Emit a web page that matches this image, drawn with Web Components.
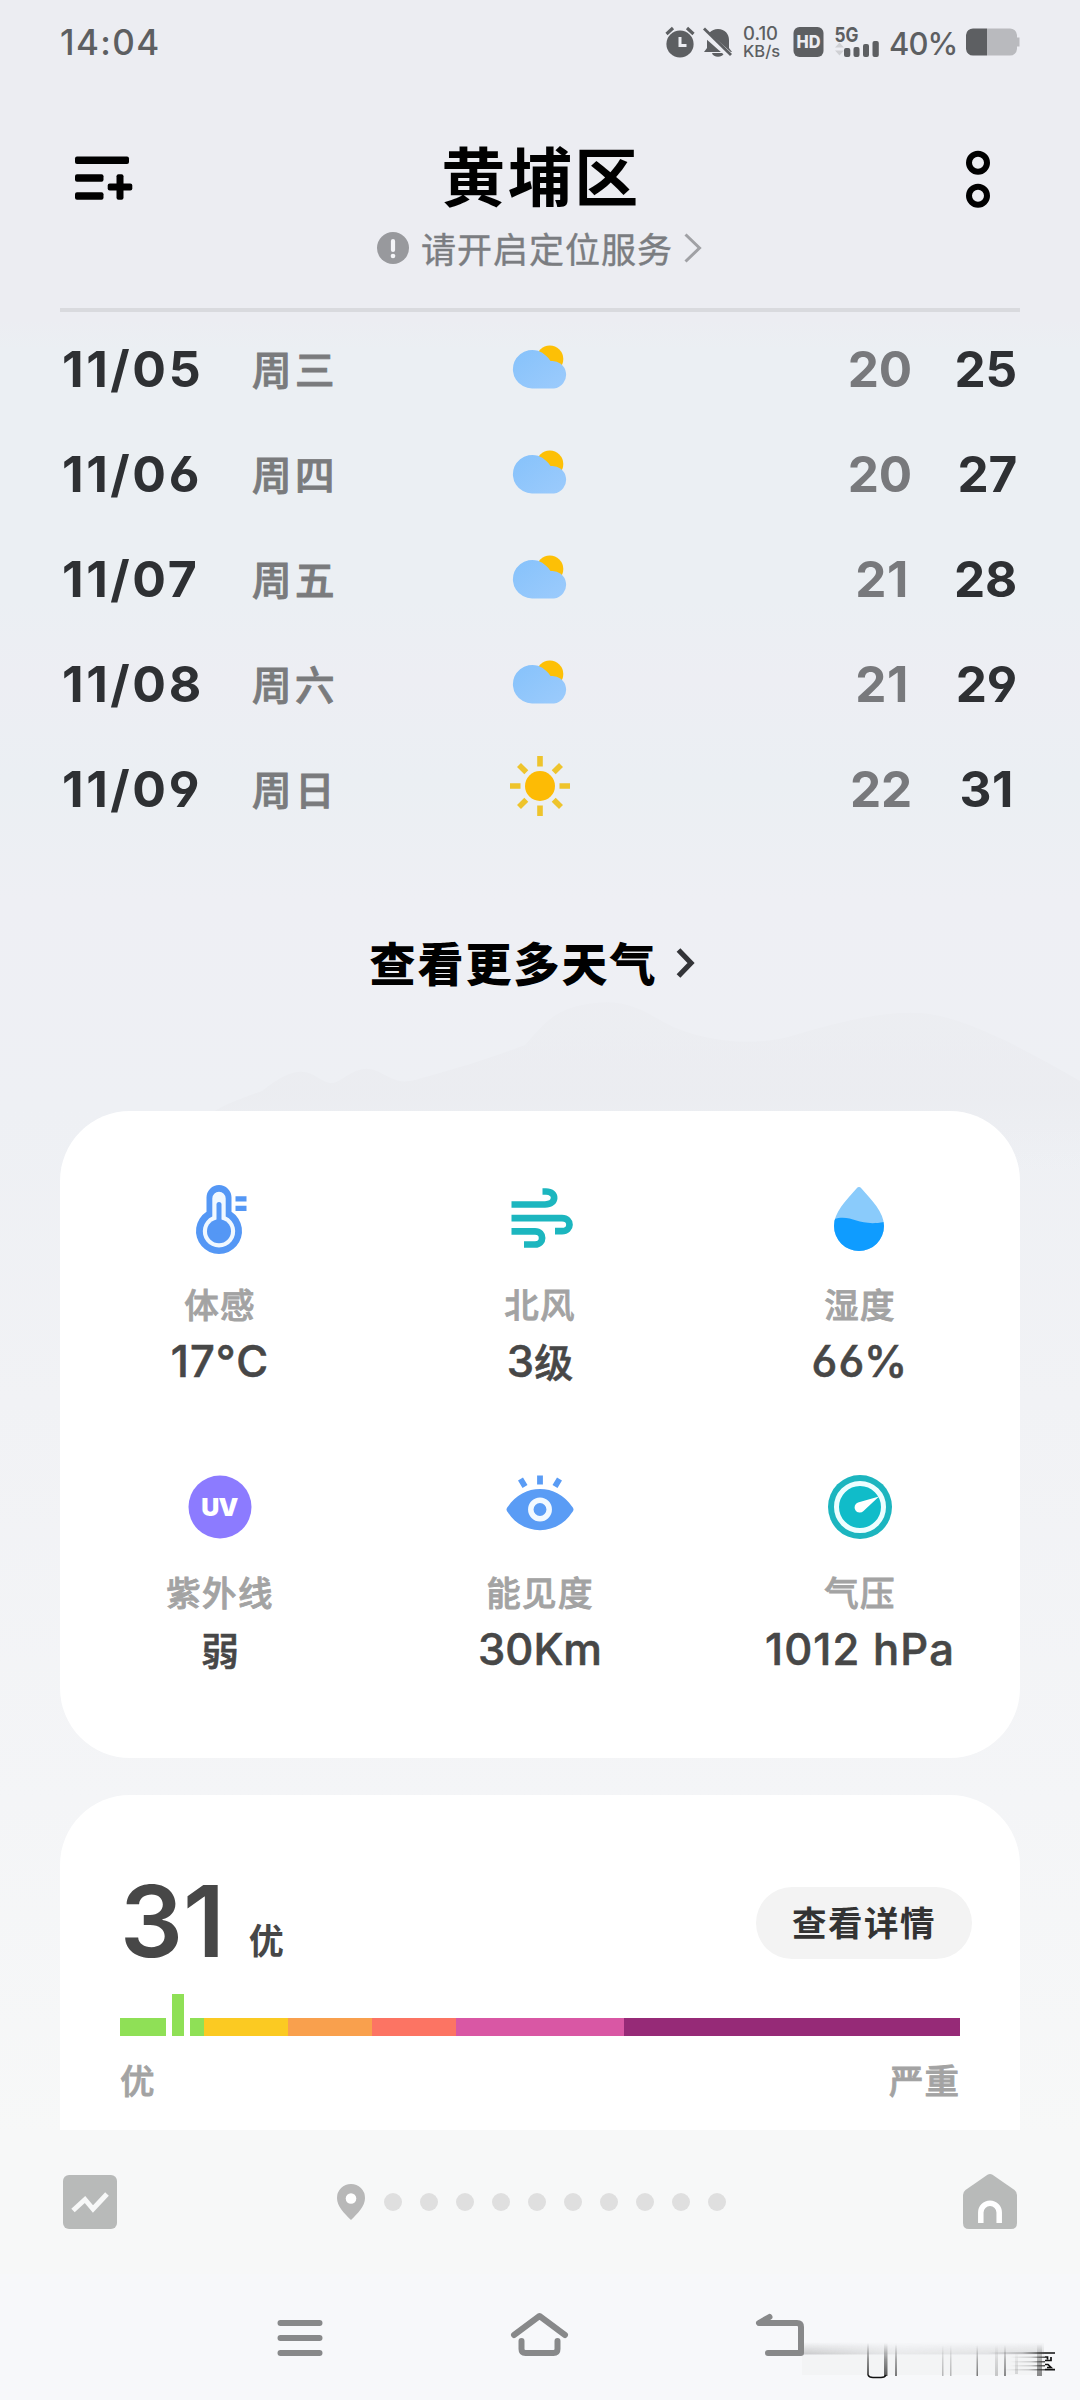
<!DOCTYPE html>
<html lang="zh-CN">
<head>
<meta charset="utf-8">
<title>天气</title>
<style>
html,body{margin:0;padding:0}
body{width:1080px;height:2400px;overflow:hidden;font-family:Inter,"Noto Sans CJK SC",sans-serif;font-feature-settings:"cv03","cv04"}
</style>
</head>
<body>
<weather-app></weather-app>
<script>
const define = (name, html, setup) => {
  const tpl = document.createElement('template');
  tpl.innerHTML = '<style>*{box-sizing:border-box}svg{display:block;flex:none;overflow:visible}</style>' + html;
  customElements.define(name, class extends HTMLElement {
    constructor() {
      super();
      this.attachShadow({mode: 'open'}).appendChild(tpl.content.cloneNode(true));
    }
    connectedCallback() { if (setup) setup(this, this.shadowRoot); }
  });
};

/* Status bar */
define('status-bar', `
<style>
:host{display:flex;height:84px;padding:0 60px 0 60px;align-items:center;justify-content:space-between;color:#5d5f62}
.time{font-size:35px;font-weight:500;letter-spacing:1.400px}
.right{display:flex;align-items:center}
.speed{display:flex;flex-direction:column;gap:3px;width:50px;margin-left:-1px;font-size:16.500px;line-height:15px;font-weight:500}
.speed span{height:15px}
.speed span:first-child{font-size:18.500px}
.pct{font-size:31px;font-weight:500;width:77px;padding-top:2px;letter-spacing:-.9px}
</style>
<span class="time">14:04</span>
<div class="right">
<svg width="79" height="32" viewBox="0 0 79 32" fill="#5d5f62"><circle cx="15" cy="18" r="13.6"/><path d="M1.5 8 8 2M22 2l6.500 6" stroke="#5d5f62" stroke-width="3.200"/><path d="M15 11v8.500h6.500" stroke="#ecedf2" stroke-width="3" fill="none"/><path d="M53 3c-7 0-11 5-11 11v8l-3 4h28l-3-4v-8c0-6-4-11-11-11zM47 27h12c-1 5-11 5-12 0z"/><path d="M36.500 4.500 66.500 31" stroke="#ecedf2" stroke-width="6.500"/><path d="M39 2.500 66 29" stroke="#5d5f62" stroke-width="2.800"/></svg>
<div class="speed"><span>0.10</span><span>KB/s</span></div>
<svg width="96" height="32" viewBox="0 0 96 32" fill="#5d5f62"><rect x=".5" y="1" width="30" height="30" rx="6"/><text x="15.500" y="22" font-size="17" font-weight="800" fill="#ecedf2" text-anchor="middle" textLength="24" lengthAdjust="spacingAndGlyphs">HD</text><text x="41.500" y="15.500" font-size="20" font-weight="700" textLength="24" lengthAdjust="spacingAndGlyphs">5G</text><path d="M42 21.500l4.500-5 4.500 5zM42 24.500l4.500 5 4.500-5z" fill="#cfd0d4"/><rect x="51" y="22" width="6.300" height="9" rx="2"/><rect x="60.500" y="21" width="6" height="10" rx="2"/><rect x="70" y="18" width="6" height="13" rx="2"/><rect x="79.500" y="15" width="6.300" height="16" rx="2"/></svg>
<span class="pct">40%</span>
<svg width="54" height="28" viewBox="0 0 54 28"><path d="M0 7a7 7 0 0 1 7-6.500h14v27H7A7 7 0 0 1 0 21z" fill="#5d5f62"/><path d="M21 .500h23a7 7 0 0 1 7 6.500v2.500h2.500v9H51V21a7 7 0 0 1-7 6.500H21z" fill="#b9babe"/></svg>
</div>`);

/* Page header */
define('page-header', `
<style>
:host{display:flex;flex-direction:column;height:228px;margin:0 60px;padding-top:53px;border-bottom:4px solid #d9dade}
.top{display:flex;height:81px;align-items:center;justify-content:space-between;padding:0 28px 0 15px}
h1{margin:0 11px 0 0;font-size:64px;line-height:81px;font-weight:700;letter-spacing:2.500px;color:#000}
.sub{display:flex;height:60px;align-items:center;justify-content:center;font-size:35px;letter-spacing:1px;color:#7b7d81;-webkit-text-stroke:.4px #7b7d81}
.sub span{margin:-2px 12px 0 12px}
</style>
<div class="top">
<svg width="58" height="46" viewBox="0 0 58 46"><rect y="1.500" width="54" height="7.500" rx="2"/><rect y="19.300" width="28.500" height="7.500" rx="2"/><rect y="37.200" width="28.500" height="7.500" rx="2"/><rect x="32.700" y="28.500" width="24.600" height="7" rx="2"/><rect x="41.500" y="19.300" width="7" height="25.400" rx="2"/></svg>
<h1><slot></slot></h1>
<svg width="32" height="60" viewBox="0 0 32 60" fill="none" stroke="#000" stroke-width="6"><circle cx="18" cy="14.800" r="9"/><circle cx="18" cy="47.800" r="9"/></svg>
</div>
<div class="sub">
<svg width="32" height="32" viewBox="0 0 32 32"><circle cx="16" cy="16" r="16" fill="#98999d"/><path d="M16 9v9" stroke="#f4f5f8" stroke-width="4.200" stroke-linecap="round"/><circle cx="16" cy="24" r="2.300" fill="#f4f5f8"/></svg>
<span><slot name="notice"></slot></span>
<svg width="18" height="30" viewBox="0 0 18 30" fill="none" stroke="#a0a1a5" stroke-width="3"><path d="M.500 1.500 14.500 15 .500 28.500"/></svg>
</div>`);

/* Weather glyphs */
define('weather-glyph', `
<style>:host{display:block}:host([kind=sunny]) .c,:host([kind=cloudy]) .s{display:none}</style>
<svg width="60" height="64" viewBox="0 0 60 64">
<g class="c"><defs><linearGradient id="g" x1="0" y1="0" x2="1" y2="1"><stop offset="0" stop-color="#86c2fb"/><stop offset="1" stop-color="#9ccbfc"/></linearGradient></defs>
<circle cx="39.800" cy="22" r="13.500" fill="#fdc006"/><path d="M22 51.500a19.300 19.300 0 1 1 14-32.800 18 18 0 0 1 4.500 5.300 13.800 13.800 0 1 1 3.500 27.500z" fill="url(#g)"/></g>
<g class="s"><circle cx="30" cy="29" r="15" fill="#fdbb05"/><path stroke="#eec42c" stroke-width="5.600" d="M30-1v10.500M30 48.500V59M0 29h10.500M49.500 29H60M9 8l7.300 7.300M43.700 42.700 51 50M51 8l-7.300 7.300M16.300 42.700 9 50"/></g>
</svg>`);

/* One forecast day */
define('forecast-day', `
<style>
:host{display:grid;grid-template-columns:192px 258px 60px 1fr 105px;height:105px;align-items:center;margin:0 60px;padding:0 3px 0 0;font-size:50px;font-weight:700;color:#2e3033}
.date{letter-spacing:2.600px;padding-left:2px}
.week{font-size:39.500px;font-weight:500;letter-spacing:3.500px;color:#7a7b7d;padding:0 0 2px 0;-webkit-text-stroke:.9px #7a7b7d}
.lo,.hi{text-align:right;font-size:49.500px;letter-spacing:-.2px}.lo{color:#78797c}
.one{padding-right:3px;letter-spacing:.6px}
</style>
<span class="date"></span><span class="week"></span><weather-glyph></weather-glyph><span class="lo"></span><span class="hi"></span>`,
(el, root) => {
  for (const k of ['date', 'week', 'lo', 'hi']) {
    const cell = root.querySelector('.' + k);
    cell.textContent = el.getAttribute(k);
    if (cell.textContent.endsWith('1')) cell.classList.add('one');
  }
  root.querySelector('weather-glyph').setAttribute('kind', el.getAttribute('kind'));
});

/* Link to the full forecast */
define('more-link', `
<style>
:host{display:flex;position:relative;height:270px;padding:0 15px 27px 0;align-items:center;justify-content:center;font-size:46px;font-weight:800;letter-spacing:2px;color:#000;gap:18px}
.hills{position:absolute;left:0;bottom:-60px;z-index:-1}
span{margin-top:-3px}
</style>
<svg class="hills" width="1080" height="170" viewBox="0 0 1080 170"><defs><linearGradient id="h" x1="0" y1="0" x2="0" y2="1"><stop offset="0" stop-color="#e9eaee" stop-opacity=".35"/><stop offset=".55" stop-color="#e9eaee" stop-opacity=".55"/><stop offset="1" stop-color="#e9eaee" stop-opacity="0"/></linearGradient></defs><path d="M200 120C220 104 240 98 262 90c25-20 40-24 55-14s18 6 28 0 20-12 34-5 20 12 36 8c50-14 70-20 110-35 20-22 30-38 70-42 30-4 50 8 70 20 40 20 90 24 130 12s100-28 140-20 90 34 145 66v90H200z" fill="url(#h)"/></svg>
<span><slot></slot></span>
<svg width="20" height="30" viewBox="0 0 20 30" fill="none" stroke="#333438" stroke-width="5.200"><path d="M2.500 2 15 15 2.500 28"/></svg>`);

/* White card */
define('soft-card', `
<style>:host{display:block;margin:0 60px;background:#fff;border-radius:70px}</style><slot></slot>`);

const icons = {
  temp: `<path d="M18.500 14.500a12.500 12.500 0 0 1 25 0v14.200a23 23 0 1 1-25 0z" fill="#5497f5"/><path d="M24.300 15.500a6.700 6.700 0 0 1 13.400 0v18a16.200 16.200 0 1 1-13.400 0z" fill="#f0f8ff"/><circle cx="31" cy="48.300" r="12" fill="#5497f5"/><path d="M31 21.500v27" stroke="#5497f5" stroke-width="5" stroke-linecap="round"/><path d="M47.500 15.800h11M47.500 25.300h11" stroke="#5497f5" stroke-width="5.300"/>`,
  wind: `<g fill="none" stroke="#1cb6bf" stroke-width="6.700" transform="translate(-1.500 -.500)"><path d="M5 22h33.500c12 0 12-13 1-13H36"/><path d="M5 35.700h50.500c10 0 10 13 0 13H48.500"/><path d="M5 48.800h23.500c9.500 0 9.500 13.200 0 13.200H17.500"/></g>`,
  drop: `<defs><clipPath id="d"><path d="M29.500 5.500q2.500-2.800 5 0c10.500 12 22.500 23.500 22.500 37.500a25 25 0 0 1-50 0C7 29 19 17.500 29.500 5.500z"/></clipPath></defs><g clip-path="url(#d)" transform="translate(-1 0)"><path d="M0 0h64v68H0z" fill="#8acbfb"/><path d="M7 36c19-5 24 8 50 3v30H7z" fill="#0f9cff"/></g>`,
  uv: `<circle cx="32" cy="36" r="31.500" fill="#8c7bff"/><text x="32.300" y="45" font-family="Inter" font-size="25" font-weight="900" fill="#fff" text-anchor="middle" textLength="38" letter-spacing="1">UV</text>`,
  eye: `<path d="M0 35.500C15 12 49 12 64 35.500c2 2.500 2 3.500 0 6C49 65 15 65 0 41.500c-2-2.500-2-3.500 0-6z" fill="#5a9cf5"/><circle cx="32" cy="38.500" r="9.200" fill="none" stroke="#f2f9ff" stroke-width="5.500"/><path d="M32 4.500v9M12.500 8l4.500 7.500M51.500 8 47 15.500" stroke="#5a9cf5" stroke-width="5.800"/>`,
  gauge: `<circle cx="32" cy="36" r="32" fill="#1cb5bf"/><circle cx="32" cy="36" r="23.500" fill="#10bcc9" stroke="#edfeff" stroke-width="5"/><path d="M51 25.500 35.500 40a5.200 5.200 0 1 1-5.500-8.500z" fill="#fff"/>`
};

/* One metric */
define('metric-cell', `
<style>
:host{display:flex;flex-direction:column;align-items:center;width:320px;height:288px}
.icon{width:64px;height:72px}
.label{margin-top:26px;font-size:34.500px;line-height:50px;height:50px;font-weight:500;letter-spacing:1.300px;color:#a3a3a3;-webkit-text-stroke:.8px #a3a3a3}
.value{margin-top:2.500px;font-size:43.500px;line-height:54px;font-weight:500;color:#474747;-webkit-text-stroke:.6px #474747}
.cjk{font-size:40px}
</style>
<div class="icon"></div><span class="label"></span><span class="value"><slot></slot></span>`,
(el, root) => {
  root.querySelector('.icon').innerHTML = '<svg width="64" height="72" viewBox="0 0 64 72">' + icons[el.getAttribute('icon')] + '</svg>';
  root.querySelector('.label').textContent = el.getAttribute('label');
});

define('metric-grid', `
<style>:host{display:grid;grid-template-columns:repeat(3,320px);height:647px;padding-top:72px;align-content:start}</style><slot></slot>`);

/* Air quality */
define('air-quality', `
<style>
:host{display:flex;flex-direction:column;height:335px;padding:80px 60px 0}
.head{display:flex;height:96px;align-items:flex-start}
.num{font-size:99px;line-height:94px;font-weight:600;color:#474747;margin-top:-1px}
.lvl{font-size:35px;font-weight:700;color:#474747;margin:41px auto 0 24px;line-height:50px}
.btn{width:216px;height:72px;margin:12px -12px 0 0;border-radius:36px;background:#f3f3f3;color:#333;font-size:34.500px;font-weight:700;letter-spacing:1.500px;display:flex;align-items:center;justify-content:center;padding-bottom:4px}
.bar{display:flex;align-items:flex-end;height:42px;margin-top:23px}
.bar i{height:18px}
.ends{display:flex;justify-content:space-between;margin-top:21px;font-size:34.500px;line-height:50px;font-weight:500;color:#a3a3a3;letter-spacing:1px;-webkit-text-stroke:.8px #a3a3a3}
</style>
<div class="head"><span class="num">31</span><span class="lvl">优</span><span class="btn">查看详情</span></div>
<div class="bar"><i style="width:46px;background:#8fe056"></i><i style="width:12px;height:42px;margin:0 6px;background:#8fe056"></i><i style="width:14px;background:#8fe056"></i><i style="width:84px;background:#fbca22"></i><i style="width:84px;background:#f9a04d"></i><i style="width:84px;background:#fc7463"></i><i style="width:168px;background:#d957a4"></i><i style="width:336px;background:#962a77"></i></div>
<div class="ends"><span>优</span><span>严重</span></div>`);

/* City pager */
define('city-pager', `
<style>
:host{display:flex;height:144px;padding:0 63px;align-items:center;justify-content:space-between;background:#f7f8f8}
.dots{display:flex;align-items:center;gap:18px;margin-right:17px}
.dots i{width:18px;height:18px;border-radius:50%;background:#dfdfdf}
.dots svg{margin-right:1px}
</style>
<svg width="54" height="56" viewBox="0 0 54 56"><rect y="1" width="54" height="54" rx="6" fill="#b8bab9"/><path d="M10 36.500 22 25.500l8 9.500 14-15" fill="none" stroke="#f7f8f8" stroke-width="5"/></svg>
<div class="dots"><svg width="28" height="36" viewBox="0 0 28 36"><path d="M14 36C7 29 0 22.500 0 14a14 14 0 0 1 28 0c0 8.500-7 15-14 22z" fill="#b8b8b8"/><circle cx="14" cy="14.500" r="5.300" fill="#fff"/></svg><i></i><i></i><i></i><i></i><i></i><i></i><i></i><i></i><i></i><i></i></div>
<svg width="54" height="56" viewBox="0 0 54 56"><path d="M24.500.800q2.500-1.600 5 0L51.500 16q2.500 2 2.500 5v28q0 6-6 6H6q-6 0-6-6V21q0-3 2.500-5z" fill="#b8bab9"/><path d="M17.800 49V38.500a9.200 9.200 0 0 1 18.400 0V49" fill="none" stroke="#fff" stroke-width="5.500"/></svg>`);

/* System navigation */
define('system-nav', `
<style>
:host{display:flex;height:126px;padding:37px 275px 0 277px;justify-content:space-between;position:relative}
.smear{position:absolute;left:798px;top:66px}
</style>
<svg width="46" height="48" viewBox="0 0 46 48" stroke="#88898a" stroke-width="6" stroke-linecap="round"><path d="M3.500 12h39M3.500 27h39M3.500 42h39"/></svg>
<svg width="58" height="48" viewBox="0 0 58 48" fill="none" stroke="#88898a" stroke-width="6" stroke-linecap="round" stroke-linejoin="round"><path d="M4 24 29.500 5 55 24"/><path d="M11.500 30v8q0 4 4 4h28q4 0 4-4v-8"/></svg>
<svg width="50" height="48" viewBox="0 0 50 48" fill="none" stroke="#88898a" stroke-width="6" stroke-linecap="round" stroke-linejoin="round"><path d="M14.500 6 4 12h38q4 0 4 4v26H13"/></svg>
<svg class="smear" width="262" height="50" viewBox="0 0 262 50">
<defs>
<linearGradient id="a" x1="0" y1="0" x2="0" y2="1"><stop offset="0" stop-color="#888" stop-opacity="0"/><stop offset="1" stop-color="#888" stop-opacity=".42"/></linearGradient>
<linearGradient id="a2" x1="0" y1="0" x2="1" y2="0"><stop offset="0" stop-color="#fff"/><stop offset=".4" stop-color="#555"/><stop offset="1" stop-color="#999"/></linearGradient>
<mask id="m"><rect x="4" y="0" width="242" height="40" fill="url(#a2)"/></mask>
<linearGradient id="b" x1="0" y1="0" x2="0" y2="1"><stop offset="0" stop-color="#333" stop-opacity="0"/><stop offset=".5" stop-color="#333" stop-opacity=".5"/><stop offset="1" stop-color="#222" stop-opacity=".75"/></linearGradient>
<linearGradient id="c" x1="0" y1="0" x2="1" y2="0"><stop offset="0" stop-color="#333" stop-opacity="0"/><stop offset=".6" stop-color="#333" stop-opacity=".2"/><stop offset="1" stop-color="#111" stop-opacity=".75"/></linearGradient>
</defs>
<g mask="url(#m)"><rect x="4" y="2" width="242" height="12.500" fill="url(#a)"/></g><rect x="4" y="15" width="242" height="20" fill="#ddd" opacity=".14"/>
<g fill="url(#b)"><rect x="69" y="3" width="2" height="32"/><rect x="86" y="3" width="3.500" height="33"/><rect x="97" y="4" width="2" height="32" opacity=".8"/><rect x="144" y="5" width="1.500" height="31" opacity=".4"/><rect x="152" y="5" width="1.500" height="31" opacity=".4"/><rect x="178.500" y="5" width="1.500" height="31" opacity=".8"/><rect x="197" y="5" width="3" height="31" opacity=".3"/><rect x="206" y="5" width="2" height="31" opacity=".7"/><rect x="239" y="4" width="5" height="32" opacity=".7"/><rect x="217" y="12" width="3" height="22" opacity=".2"/></g>
<path d="M70 35q1 2.500 5 2.500h8q4 0 5-2.500" fill="none" stroke="#111" stroke-width="1.500"/>
<g fill="url(#c)"><rect x="190" y="12" width="57" height="2"/><rect x="212" y="16.500" width="35" height="1.500"/><rect x="212" y="21" width="35" height="1.500"/><rect x="212" y="25" width="35" height="1.500"/><rect x="205" y="29" width="42" height="1.500"/></g>
<path d="M247 13h10M247 17h2.500v2.500M247 20.500h6v-3.500M247 24.500h3l3 3h-4M247 29.600h10" fill="none" stroke="#111" stroke-width="1.700"/>
</svg>`);

/* Whole screen */
define('weather-app', `
<style>
:host{display:flex;flex-direction:column;position:relative;z-index:0;width:1080px;height:2400px;overflow:hidden;background:linear-gradient(#ecedf2 0,#ecedf2 320px,#ebeff3 350px,#ebeff3 600px,#edeef3 680px,#ebeff3 780px,#eeeff4 900px,#eef0f4 1110px,#f1f2f5 1400px,#f4f5f7 1800px,#f7f8f8 2140px,#f7f8fa 2220px)}
forecast-day:first-of-type{margin-top:4px}
soft-card+soft-card{margin-top:37px;border-radius:70px 70px 0 0}
</style>
<status-bar></status-bar>
<page-header>黄埔区<span slot="notice">请开启定位服务</span></page-header>
<forecast-day date="11/05" week="周三" kind="cloudy" lo="20" hi="25"></forecast-day>
<forecast-day date="11/06" week="周四" kind="cloudy" lo="20" hi="27"></forecast-day>
<forecast-day date="11/07" week="周五" kind="cloudy" lo="21" hi="28"></forecast-day>
<forecast-day date="11/08" week="周六" kind="cloudy" lo="21" hi="29"></forecast-day>
<forecast-day date="11/09" week="周日" kind="sunny" lo="22" hi="31"></forecast-day>
<more-link>查看更多天气</more-link>
<soft-card><metric-grid>
<metric-cell icon="temp" label="体感" style="letter-spacing:1.100px">17°C</metric-cell>
<metric-cell icon="wind" label="北风">3<span style="font-size:39px">级</span></metric-cell>
<metric-cell icon="drop" label="湿度" style="letter-spacing:1.200px">66%</metric-cell>
<metric-cell icon="uv" label="紫外线"><span style="font-size:38px">弱</span></metric-cell>
<metric-cell icon="eye" label="能见度">30Km</metric-cell>
<metric-cell icon="gauge" label="气压" style="letter-spacing:1.100px">1012 hPa</metric-cell>
</metric-grid></soft-card>
<soft-card><air-quality></air-quality></soft-card>
<city-pager></city-pager>
<system-nav></system-nav>`);
</script>
</body>
</html>
